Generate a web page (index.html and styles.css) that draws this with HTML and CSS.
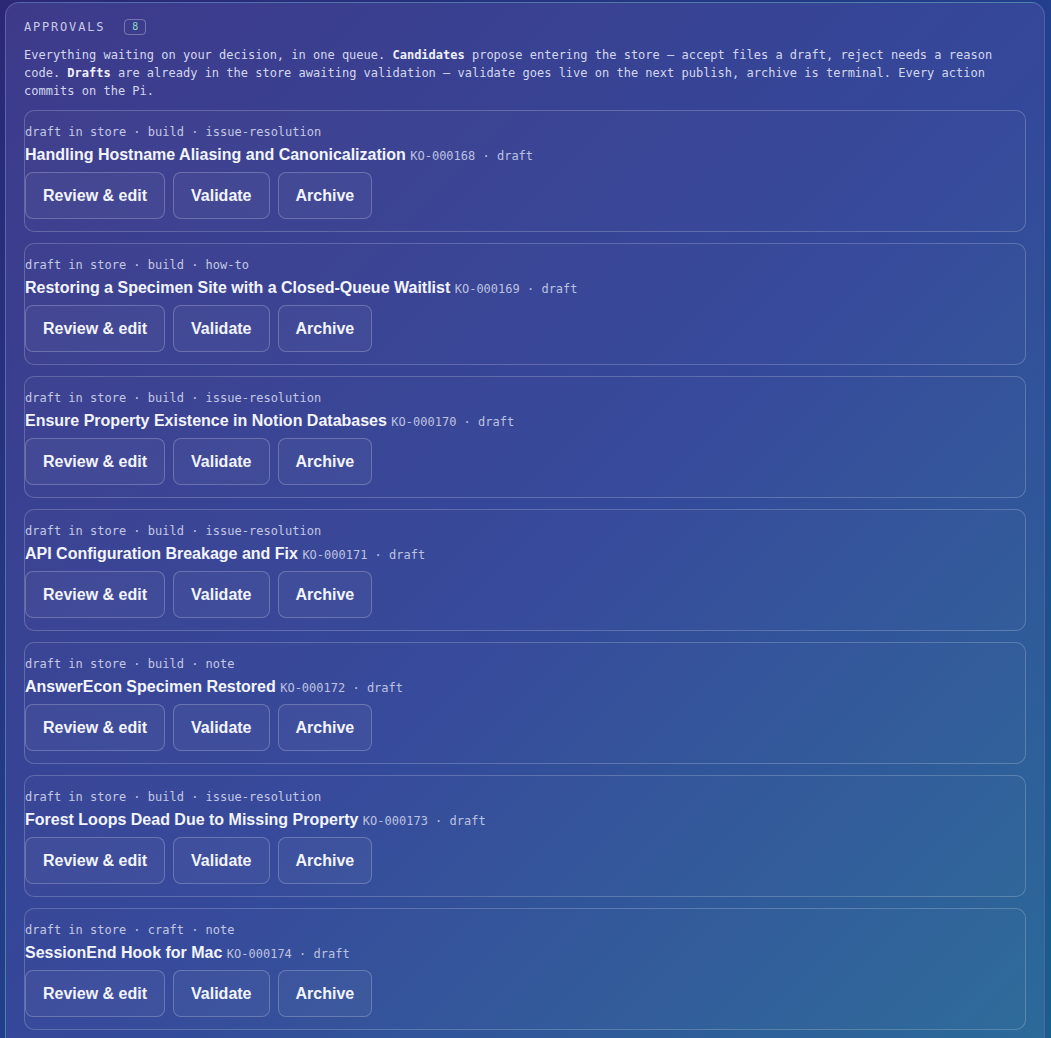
FILE: index.html
```html
<!DOCTYPE html>
<html lang="en">
<head>
<meta charset="utf-8">
<title>Approvals</title>
<link rel="stylesheet" href="styles.css">
</head>
<body>
<section class="panel">
  <header class="panel-head">
    <span class="panel-title">APPROVALS</span>
    <span class="badge">8</span>
  </header>
  <p class="intro">Everything waiting on your decision, in one queue. <b>Candidates</b> propose entering the store — accept files a draft, reject needs a reason code. <b>Drafts</b> are already in the store awaiting validation — validate goes live on the next publish, archive is terminal. Every action commits on the Pi.</p>

  <div class="queue">
    <article class="card">
      <div class="meta">draft in store · build · issue-resolution</div>
      <div class="title">Handling Hostname Aliasing and Canonicalization <span class="ident">KO-000168 · draft</span></div>
      <div class="actions"><button class="btn">Review &amp; edit</button><button class="btn">Validate</button><button class="btn">Archive</button></div>
    </article>
    <article class="card">
      <div class="meta">draft in store · build · how-to</div>
      <div class="title">Restoring a Specimen Site with a Closed-Queue Waitlist <span class="ident">KO-000169 · draft</span></div>
      <div class="actions"><button class="btn">Review &amp; edit</button><button class="btn">Validate</button><button class="btn">Archive</button></div>
    </article>
    <article class="card">
      <div class="meta">draft in store · build · issue-resolution</div>
      <div class="title">Ensure Property Existence in Notion Databases <span class="ident">KO-000170 · draft</span></div>
      <div class="actions"><button class="btn">Review &amp; edit</button><button class="btn">Validate</button><button class="btn">Archive</button></div>
    </article>
    <article class="card">
      <div class="meta">draft in store · build · issue-resolution</div>
      <div class="title">API Configuration Breakage and Fix <span class="ident">KO-000171 · draft</span></div>
      <div class="actions"><button class="btn">Review &amp; edit</button><button class="btn">Validate</button><button class="btn">Archive</button></div>
    </article>
    <article class="card">
      <div class="meta">draft in store · build · note</div>
      <div class="title">AnswerEcon Specimen Restored <span class="ident">KO-000172 · draft</span></div>
      <div class="actions"><button class="btn">Review &amp; edit</button><button class="btn">Validate</button><button class="btn">Archive</button></div>
    </article>
    <article class="card">
      <div class="meta">draft in store · build · issue-resolution</div>
      <div class="title">Forest Loops Dead Due to Missing Property <span class="ident">KO-000173 · draft</span></div>
      <div class="actions"><button class="btn">Review &amp; edit</button><button class="btn">Validate</button><button class="btn">Archive</button></div>
    </article>
    <article class="card">
      <div class="meta">draft in store · craft · note</div>
      <div class="title">SessionEnd Hook for Mac <span class="ident">KO-000174 · draft</span></div>
      <div class="actions"><button class="btn">Review &amp; edit</button><button class="btn">Validate</button><button class="btn">Archive</button></div>
    </article>
    <article class="card">
      <div class="meta">draft in store · build · note</div>
      <div class="title">Pending Draft <span class="ident">KO-000175 · draft</span></div>
      <div class="actions"><button class="btn">Review &amp; edit</button><button class="btn">Validate</button><button class="btn">Archive</button></div>
    </article>
  </div>
</section>
</body>
</html>
```

FILE: styles.css
```css
html, body {
  margin: 0;
  padding: 0;
  height: 100%;
  overflow: hidden;
}

body {
  background: linear-gradient(135deg, #2c2776 0%, #213f8e 50%, #175f8c 100%);
  font-family: "DejaVu Sans Mono", monospace;
  color: #e8ebf7;
}

.panel {
  margin: 2px 6px 0 5px;
  padding: 10px 18px 18px 18px;
  border: 1px solid rgba(255, 255, 255, 0.16);
  border-radius: 14px;
  background: linear-gradient(135deg, #3e3a8a 0%, #34489a 50%, #2a6f99 100%);
  box-sizing: border-box;
}

.panel-head {
  display: flex;
  align-items: center;
  height: 28px;
}

.panel-title {
  font-size: 12px;
  letter-spacing: 1.8px;
  color: #c7cbe6;
}

.badge {
  margin-left: 19px;
  width: 20px;
  height: 14px;
  border: 1px solid rgba(255, 255, 255, 0.3);
  border-radius: 4px;
  font-size: 10px;
  line-height: 14px;
  text-align: center;
  color: #86dcc6;
}

.intro {
  margin: 5px 0 10px 0;
  font-size: 12px;
  line-height: 18px;
  color: #d3d7ee;
}

.intro b {
  color: #eef0fa;
}

.queue {
  display: flex;
  flex-direction: column;
  gap: 11px;
}

.card {
  border: 1px solid rgba(255, 255, 255, 0.2);
  border-radius: 10px;
  padding: 12px 0 12px 0;
  background: rgba(255, 255, 255, 0.015);
}

.meta {
  font-size: 12px;
  line-height: 18px;
  color: #c3c8e4;
}

.title {
  margin-top: 2px;
  font-family: "Liberation Sans", Arial, sans-serif;
  font-weight: bold;
  font-size: 16px;
  line-height: 24px;
  height: 24px;
  color: #f2f4fc;
}

.ident {
  font-family: "DejaVu Sans Mono", monospace;
  font-weight: normal;
  font-size: 12px;
  line-height: 12px;
  color: #bcc2e0;
}

.actions {
  display: flex;
  gap: 8px;
  margin-top: 5px;
}

.btn {
  font-family: "Liberation Sans", Arial, sans-serif;
  font-weight: bold;
  font-size: 16px;
  line-height: 19px;
  padding: 13px 17px;
  border: 1px solid rgba(255, 255, 255, 0.22);
  border-radius: 8px;
  background: rgba(255, 255, 255, 0.035);
  color: #f2f4fc;
}
```
